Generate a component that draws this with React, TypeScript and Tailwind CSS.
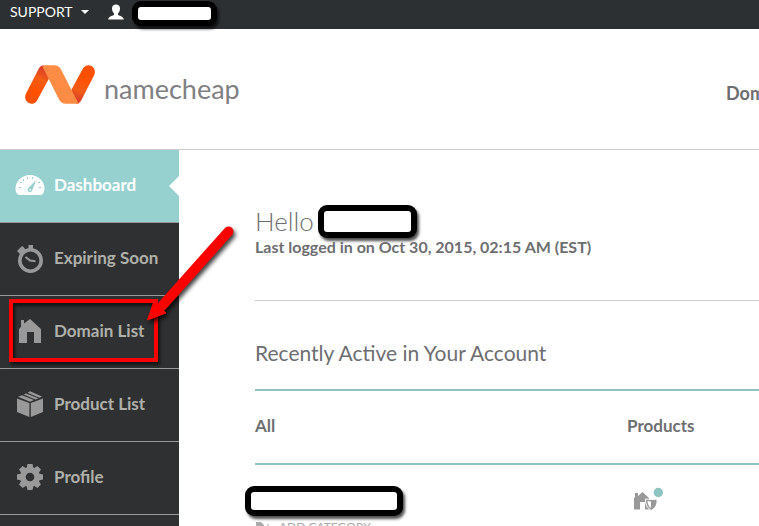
import type { ReactNode } from "react";

function Redacted({ className }: { className: string }) {
  return (
    <span
      aria-hidden="true"
      className={`inline-block shrink-0 rounded-[9px] bg-black p-[6px] shadow-[2px_3px_3px_rgba(0,0,0,0.7)] ${className}`}
    >
      <span className="block h-full rounded-[3px] bg-white" />
    </span>
  );
}

function Logo() {
  return (
    <svg width="72" height="40" viewBox="24 65 72 40" aria-hidden="true">
      <defs>
        <linearGradient id="left" x1="31" y1="97" x2="45" y2="68" gradientUnits="userSpaceOnUse">
          <stop offset="0.2" stopColor="#ff5000" />
          <stop offset="0.65" stopColor="#f25d17" />
          <stop offset="1" stopColor="#d93a2b" />
        </linearGradient>
        <linearGradient id="right" x1="89" y1="72" x2="76" y2="101" gradientUnits="userSpaceOnUse">
          <stop offset="0.2" stopColor="#ff5000" />
          <stop offset="0.65" stopColor="#f25d17" />
          <stop offset="1" stopColor="#d93a2b" />
        </linearGradient>
      </defs>
      <path d="M43 65.3 Q40.3 65.8 38.8 68.5 L25.9 93.8 C22.5 101 31 107.500 36.600 101.200 L37.600 99.600 L52 73 Z" fill="url(#left)" />
      <path d="M77 103.700 Q79.700 103.200 81.200 100.500 L94.100 75.200 C97.500 68 89 61.500 83.400 67.800 L82.400 69.400 L68 96 Z" fill="url(#right)" />
      <path d="M43 65.300 H54 Q58.600 65.300 61 69.500 L71.800 90.500 L77.500 101.500 Q78.500 103.500 79.500 103.700 H66 Q61.400 103.700 59 99.500 L48.800 79 L43 67.800 Q42 65.800 43 65.300 Z" fill="#ff8c44" />
    </svg>
  );
}

function GaugeIcon() {
  return (
    <svg width="30" height="22" viewBox="0 0 30 22" aria-hidden="true">
      <path d="M15 1 C6.500 1 0.500 7.500 0.500 14.500 C0.500 18 2 21 4.500 21 H25.500 C28 21 29.500 18 29.500 14.500 C29.500 7.500 23.500 1 15 1 Z" fill="#fff" />
      <g fill="#97d1cf">
        <path d="M21 6 L17.400 16 A2.400 2.400 0 1 1 13.200 14.200 Z" />
        <rect x="4" y="13" width="2" height="1" />
        <rect x="24" y="13" width="2" height="1" />
        <rect x="5" y="8" width="2" height="1" />
        <rect x="23" y="8" width="2" height="1" />
        <rect x="8" y="5" width="1" height="2" />
        <rect x="12" y="3" width="1" height="2" />
        <rect x="17" y="3" width="1" height="2" />
      </g>
      <circle cx="15.200" cy="15.800" r="0.900" fill="#fff" />
    </svg>
  );
}

function StopwatchIcon() {
  return (
    <svg width="30" height="30" viewBox="0 0 30 30" aria-hidden="true">
      <circle cx="15.500" cy="17.500" r="10.700" fill="none" stroke="#999" strokeWidth="3.600" />
      <path d="M13.500 2 H18 V7 H13.500 Z M4 10 L2 8 L7 3 L9 4.500 L10.500 7 L6 12 Z" fill="#999" />
      <path d="M10.500 14 L15 17.600 L20.500 18.200" fill="none" stroke="#999" strokeWidth="2" />
    </svg>
  );
}

function HouseIcon() {
  return (
    <svg width="30" height="28" viewBox="0 0 30 28" aria-hidden="true">
      <path d="M6 3 H9 V6.500 L15 2 L26 12 V26 H19 V15 H12 V26 H4 V12 L6 10 Z" fill="#999" />
    </svg>
  );
}

function BoxIcon() {
  return (
    <svg width="30" height="28" viewBox="0 0 30 28" aria-hidden="true">
      <g fill="#999">
        <path d="M2 8.500 L14.400 13 V27 L2 22 Z M28 8.500 L15.800 13 V27 L28 22 Z" />
        <path d="M3 6.800 L7 5.200 L19 10 L15 11.700 Z M8.500 4.500 L11 3.500 L23.500 8.300 L20.500 9.400 Z M12.500 2.800 L15 1.200 L27 6.500 L24.500 7.700 Z" />
      </g>
    </svg>
  );
}

function GearIcon() {
  return (
    <svg width="30" height="28" viewBox="-15 -14 30 28" aria-hidden="true">
      <g fill="#999">
        <path fillRule="evenodd" d="M0 -10 A10 10 0 1 1 0 10 A10 10 0 1 1 0 -10 Z M0 -4.300 A4.300 4.300 0 1 0 0 4.300 A4.300 4.300 0 1 0 0 -4.300 Z" />
        {[0, 45, 90, 135, 180, 225, 270, 315].map((a) => (
          <path key={a} d="M-3.500 -8.500 L-2.500 -13 H2.500 L3.500 -8.500 Z" transform={`rotate(${a})`} />
        ))}
      </g>
    </svg>
  );
}

function Item({ icon, label, active, children }: { icon: ReactNode; label: string; active?: boolean; children?: ReactNode }) {
  return (
    <li className={`relative border-b border-[#999] ${active ? "bg-[#97d1cf] text-white" : "text-[#b0b0ab]"}`}>
      <a href="#" aria-current={active ? "page" : undefined} className="flex h-[72px] items-center gap-[9px] pb-[2px] pl-[15px] text-[17px] font-bold">
        <span className="flex w-[30px] justify-center">{icon}</span>
        {label}
      </a>
      {children}
    </li>
  );
}

function Annotation() {
  return (
    <>
      <span className="pointer-events-none absolute top-[3px] left-[9px] h-[63px] w-[149px] border-4 border-[#f00] shadow-[2px_3px_3px_rgba(0,0,0,0.6),inset_2px_3px_3px_rgba(0,0,0,0.6)]" />
      <svg className="pointer-events-none absolute -top-[76px] left-[140px] z-10" width="104" height="108" viewBox="140 220 104 108" aria-hidden="true">
        <g className="drop-shadow-[2px_3px_2px_rgba(0,0,0,0.75)]">
          <path d="M228.500 231.500 L162 306" stroke="#f00" strokeWidth="10" strokeLinecap="round" />
          <path d="M147.500 320 L154 301 L166 313 Z" fill="#f00" stroke="#f00" strokeWidth="1" strokeLinejoin="round" />
        </g>
      </svg>
    </>
  );
}

export default function App() {
  return (
    <div className="flex min-h-screen flex-col overflow-x-hidden bg-white font-['Lato','Open_Sans',sans-serif] text-[#6d6e70]">
      <div className="flex h-[29px] items-start bg-[#2d3033] text-white">
        <button type="button" className="ml-[10px] flex h-6 items-center gap-2 text-sm">
          SUPPORT
          <svg width="8" height="4" viewBox="0 0 8 4" aria-hidden="true">
            <path d="M0 0 H8 L4 4 Z" fill="#fff" />
          </svg>
        </button>
        <svg className="mt-1 ml-[19px]" width="16" height="16" viewBox="0 0 16 16" aria-hidden="true">
          <path d="M8 0.500 C10.500 0.500 12 2 12 4.500 C12 6.500 11 8.500 10 9.500 V11 C12 12 15.500 12.500 15.800 15.500 H0.200 C0.500 12.500 4 12 6 11 V9.500 C5 8.500 4 6.500 4 4.500 C4 2 5.500 0.500 8 0.500 Z" fill="#fff" />
        </svg>
        <Redacted className="relative mt-px ml-2 h-[25px] w-[85px]" />
      </div>

      <header className="flex h-[121px] items-center border-b border-[#ccc] pl-6">
        <a href="#" className="flex items-center gap-2 pb-2">
          <Logo />
          <span className="pt-2 text-[27px] leading-8 text-[#808083]">namecheap</span>
        </a>
        <nav className="ml-auto w-[33px] overflow-hidden pt-2 text-lg font-bold">
          <a href="#">Domains</a>
        </nav>
      </header>

      <div className="flex flex-1">
        <aside className="w-[179px] shrink-0 bg-[#2f3031]">
          <ul>
            <Item active label="Dashboard" icon={<GaugeIcon />}>
              <svg className="absolute top-[26px] right-0" width="10" height="20" viewBox="0 0 10 20" aria-hidden="true">
                <path d="M10 0 V20 L0 10 Z" fill="#fff" />
              </svg>
            </Item>
            <Item label="Expiring Soon" icon={<StopwatchIcon />} />
            <Item label="Domain List" icon={<HouseIcon />}>
              <Annotation />
            </Item>
            <Item label="Product List" icon={<BoxIcon />} />
            <Item label="Profile" icon={<GearIcon />} />
          </ul>
        </aside>

        <main className="min-w-0 flex-1 pl-[76px]">
          <section className="h-[151px] border-b border-[#ccc] pt-[55px]">
            <h1 className="flex h-8 items-center gap-1 text-[26px] font-light">
              Hello
              <Redacted className="h-[33px] w-[99px]" />
            </h1>
            <p className="text-base leading-5 font-bold">Last logged in on Oct 30, 2015, 02:15 AM (EST)</p>
          </section>
          <h2 className="flex h-[88px] items-center pt-4 text-[21px]">Recently Active in Your Account</h2>
          <table className="w-full table-fixed border-collapse text-left">
            <thead>
              <tr className="h-[74px] border-y-2 border-[#8dc3c1] text-[17px]">
                <th className="w-[372px] pb-[2px] font-bold">All</th>
                <th className="pb-[2px] font-bold">Products</th>
              </tr>
            </thead>
            <tbody>
              <tr>
                <td className="pt-[21px] align-top">
                  <Redacted className="-ml-[10px] block! h-[30px] w-[158px]" />
                  <button type="button" className="mt-[3px] flex h-4 items-center gap-2 text-xs text-[#aaa]">
                    <svg width="16" height="12" viewBox="0 0 16 12" aria-hidden="true">
                      <path d="M1 1 H6 L9 4 V11 H1 Z M11 5 H12.500 V3 H13.500 V5 H16 V6 H13.500 V8 H12.500 V6 H11 Z" fill="#aaa" />
                    </svg>
                    ADD CATEGORY
                  </button>
                </td>
                <td className="pt-[22px] pl-1.5 align-top">
                  <svg width="32" height="26" viewBox="0 0 32 26" aria-hidden="true">
                    <path d="M2 6 H5 V9 L9.500 5 L16 11 V22.500 H12 V15 H7 V22.500 H1 V11 L2 10 Z" fill="#999" />
                    <path d="M12.500 12 Q18.500 13 24 12 Q25 20 18.300 23.500 Q12 20 12.500 12 Z" fill="#999" stroke="#fff" strokeWidth="1" />
                    <path d="M14.500 14 L18 14.500 V21 Q14.500 18.500 14.500 14 Z" fill="#fff" />
                    <circle cx="25.300" cy="5.500" r="4.700" fill="#8dc3c1" />
                  </svg>
                </td>
              </tr>
            </tbody>
          </table>
        </main>
      </div>
    </div>
  );
}
